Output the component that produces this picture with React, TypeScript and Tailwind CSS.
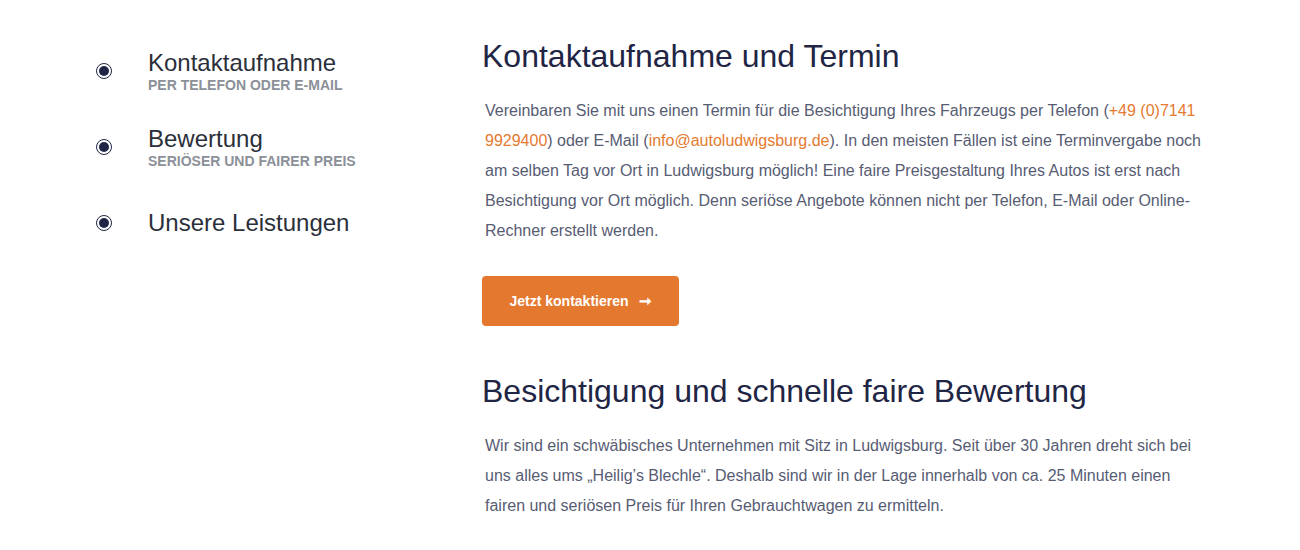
import React from "react";

const items = [
  { title: "Kontaktaufnahme", sub: "PER TELEFON ODER E-MAIL" },
  { title: "Bewertung", sub: "SERIÖSER UND FAIRER PREIS" },
  { title: "Unsere Leistungen", sub: "" },
];

function Bullet() {
  return (
    <span className="flex h-4 w-4 shrink-0 items-center justify-center rounded-full border border-[#1f2544] bg-white">
      <span className="h-[10px] w-[10px] rounded-full bg-[#1f2544]" />
    </span>
  );
}

export default function App() {
  return (
    <div
      className="flex min-h-[550px] w-[1300px] bg-white"
      style={{ fontFamily: '"Liberation Sans", Arial, Helvetica, sans-serif' }}
    >
      <div className="w-[482px] shrink-0 pl-[96px] pt-[33px]">
        {items.map((it) => (
          <div key={it.title} className="flex h-[76px] items-center gap-[36px]">
            <Bullet />
            <div className="flex flex-col">
              <span className="text-[24px] leading-[28px] text-[#2b2f3a]">{it.title}</span>
              {it.sub && (
                <span className="text-[14px] font-bold leading-[17px] text-[#8b9099]">{it.sub}</span>
              )}
            </div>
          </div>
        ))}
      </div>
      <div className="flex w-[740px] flex-col items-start pt-[37px]">
        <h1 className="text-[32px] leading-[38px] text-[#1f2544]">Kontaktaufnahme und Termin</h1>
        <p className="ml-[3px] mt-[21px] w-[725px] text-[16px] leading-[30px] text-[#575c73]">
          Vereinbaren Sie mit uns einen Termin für die Besichtigung Ihres Fahrzeugs per Telefon (
          <span className="text-[#e57a30]">+49 (0)7141 9929400</span>) oder E-Mail (
          <span className="text-[#e57a30]">info@autoludwigsburg.de</span>). In den meisten Fällen ist eine
          Terminvergabe noch am selben Tag vor Ort in Ludwigsburg möglich! Eine faire Preisgestaltung Ihres
          Autos ist erst nach Besichtigung vor Ort möglich. Denn seriöse Angebote können nicht per Telefon,
          E-Mail oder Online-Rechner erstellt werden.
        </p>
        <button className="mt-[30px] flex h-[50px] w-[197px] items-center justify-center gap-[10px] rounded-[4px] bg-[#e5782f] text-[14px] font-bold text-white">
          <span>Jetzt kontaktieren</span>
          <span className="text-[15px]">➞</span>
        </button>
        <h2 className="mt-[46px] text-[32px] leading-[38px] text-[#1f2544]">
          Besichtigung und schnelle faire Bewertung
        </h2>
        <p className="ml-[3px] mt-[21px] w-[725px] text-[16px] leading-[30px] text-[#575c73]">
          Wir sind ein schwäbisches Unternehmen mit Sitz in Ludwigsburg. Seit über 30 Jahren dreht sich bei
          uns alles ums „Heilig’s Blechle“. Deshalb sind wir in der Lage innerhalb von ca. 25 Minuten einen
          fairen und seriösen Preis für Ihren Gebrauchtwagen zu ermitteln.
        </p>
      </div>
    </div>
  );
}
